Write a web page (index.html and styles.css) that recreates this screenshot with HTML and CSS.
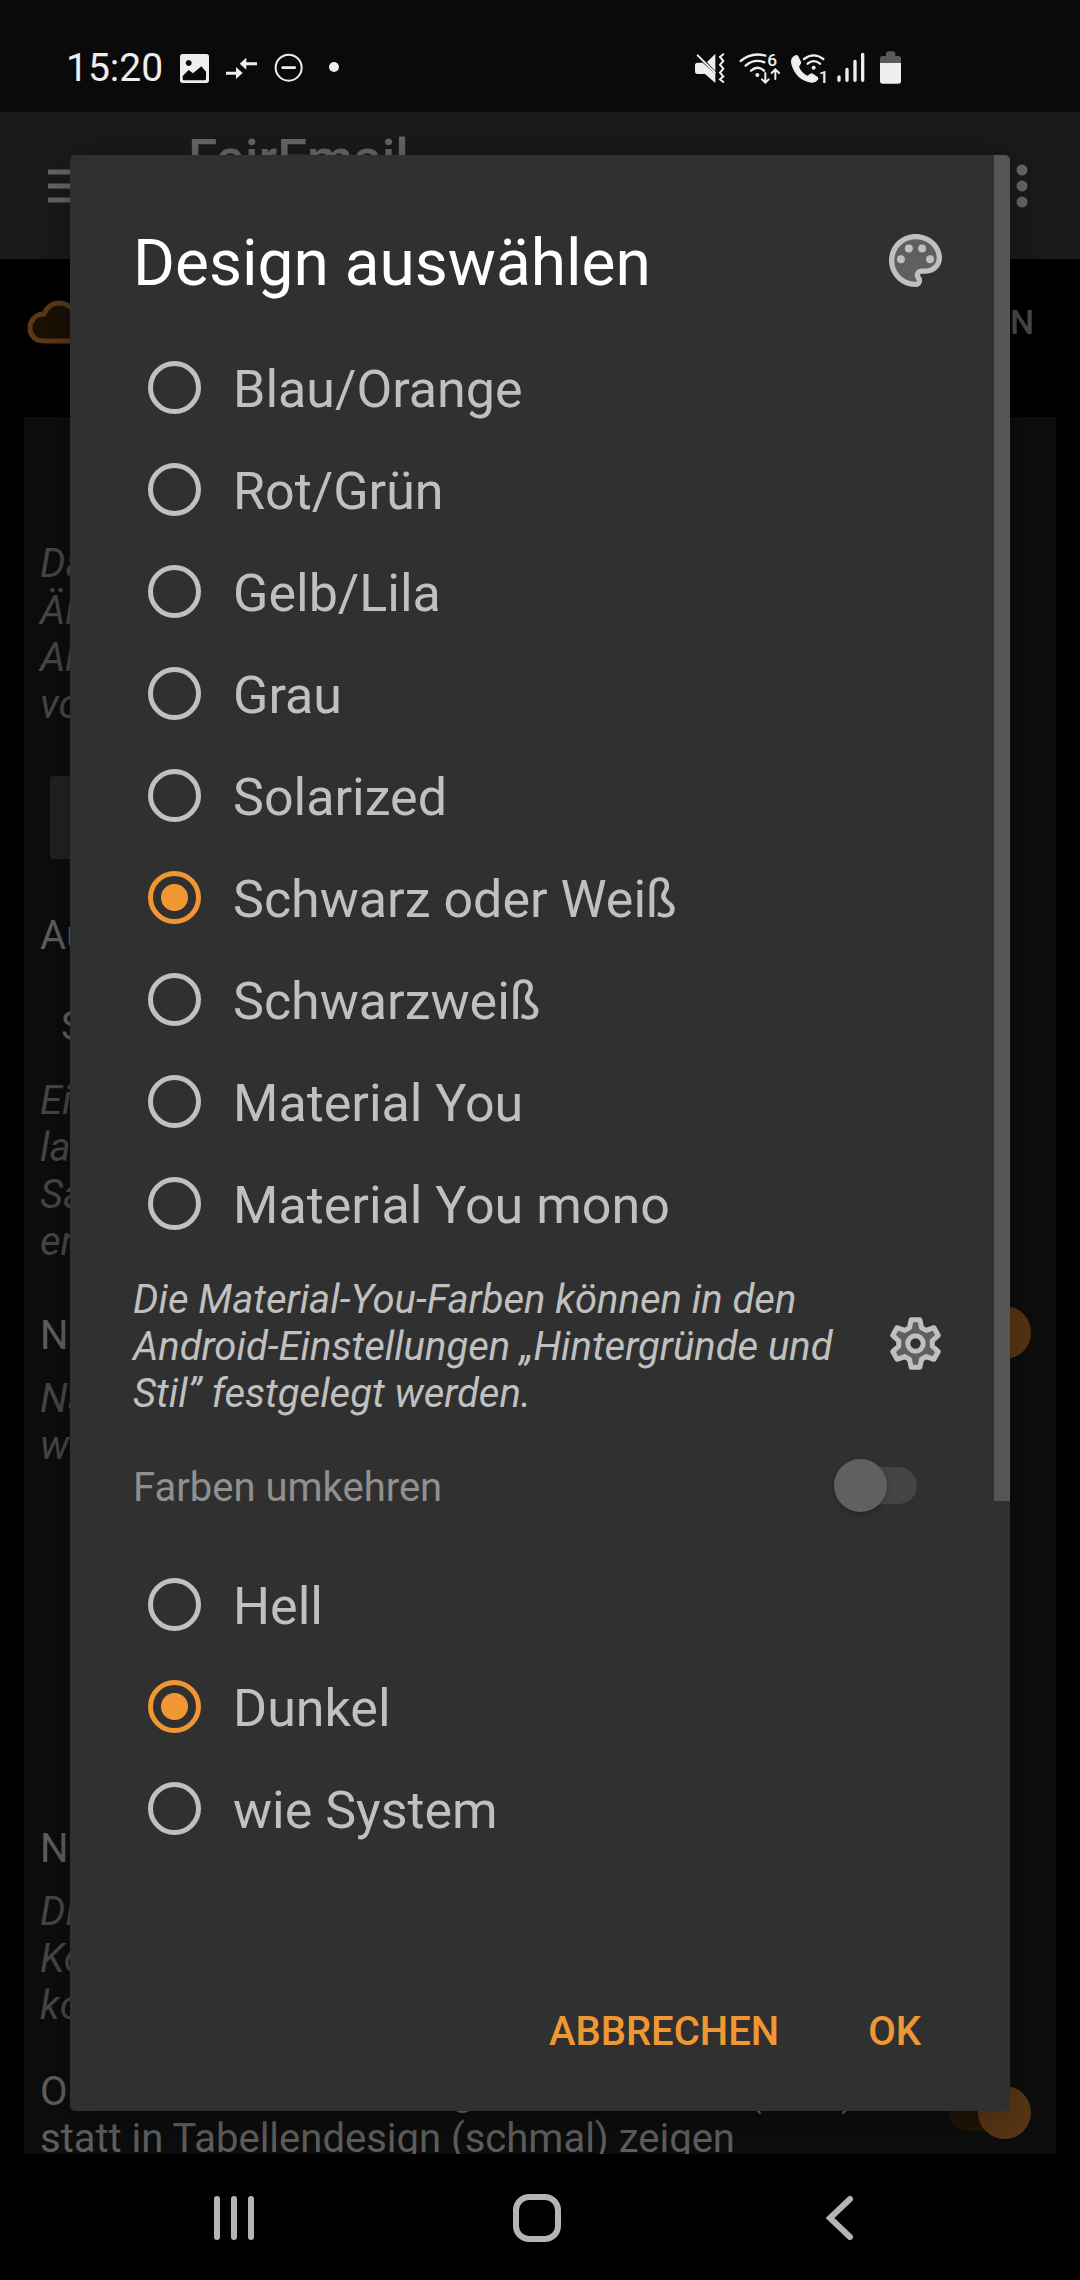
FILE: index.html
```html
<!DOCTYPE html>
<html lang="de">
<head>
    <meta charset="utf-8">
    <meta name="viewport" content="width=device-width">
    <title>FairEmail</title>
    <link rel="stylesheet" href="styles.css">
</head>
<body>
    <div class="statusbar">
        <div class="status-left">
            <span class="time">15:20</span>
            <svg width="29" height="36" viewBox="360 30 87 108">
                <path fill-rule="evenodd" fill="#eee" d="M368 42h71q8 0 8 8v71q0 8-8 8h-71q-8 0-8-8V50q0-8 8-8zM368 108v8q0 5 5 5h60q5 0 5-5V95l-14-16-25 21-13-10zM386 60a9 9 0 1 0 .1 0z"/>
            </svg>
            <svg width="31" height="36" viewBox="498 30 93 108">
                <path fill="#eee" d="M498 95h30V81l20 18-20 18v-13h-30zM591 67h-32V53l-20 18 20 18V76h32z"/>
            </svg>
            <svg width="29" height="36" viewBox="642 30 87 108">
                <circle cx="686" cy="83" r="39" fill="none" stroke="#eee" stroke-width="6"/>
                <path stroke="#eee" stroke-width="8" stroke-linecap="round" d="M668 83h36"/>
            </svg>
            <svg width="19" height="36" viewBox="783 30 57 108">
                <circle cx="825" cy="81" r="15" fill="#eee"/>
            </svg>
        </div>
        <div class="status-right">
            <svg width="32" height="36" viewBox="45 30 96 108">
                <path fill="#eee" d="M106 41v53L81 66zM53 68h15l38 34v27L75 102H53q-8 0-8-8V76q0-8 8-8z"/>
                <path fill="none" stroke="#eee" stroke-width="6" stroke-linecap="round" d="M53 46l52 52M130 43l-10 8 10 12-10 11 10 12-10 12 10 11-10 9 10 8"/>
            </svg>
            <svg width="40" height="36" viewBox="177 30 120 108">
                <g fill="none" stroke="#eee" stroke-width="7" stroke-linecap="round">
                    <path d="M182 63q33-28 74-16M197 77q26-22 56-10M213 92q20-17 39 0"/>
                    <path stroke-width="6" d="M256 99v27M246 118l10 10 10-10M286 117V90M275 99l11-11 11 11"/>
                </g>
                <circle cx="232" cy="105" r="6" fill="#eee"/>
                <text x="262" y="79" class="badge-text">6</text>
            </svg>
            <svg width="34" height="36" viewBox="333 30 102 108">
                <path fill="#eee" d="M346 46q5-3 9 3l8 16q2 5-3 10l-3 5q8 19 25 27l9-6q4-3 9 1l13 9q4 3 1 8-8 11-21 9-45-7-59-55-5-20 12-27z"/>
                <path fill="none" stroke="#eee" stroke-width="7" stroke-linecap="round" d="M372 57q29-22 58 0M383 71q18-15 37 0"/>
                <circle cx="401" cy="83" r="6" fill="#eee"/>
                <text x="416" y="128" class="badge-text">1</text>
            </svg>
            <svg width="31" height="36" viewBox="471 30 93 108">
                <path stroke="#eee" stroke-width="10" stroke-linecap="round" d="M477 111v10M501 88v33M525 64v57M548 43v78"/>
            </svg>
            <svg width="21" height="36" viewBox="600 30 63 108">
                <path fill="#5a5a5a" d="M600 69V56q0-8 8-8h10v-6q0-8 8-8h12q8 0 8 8v6h9q8 0 8 8v13z"/>
                <path fill="#eee" d="M600 69h63v54q0 8-8 8h-47q-8 0-8-8z"/>
            </svg>
        </div>
    </div>

    <header class="appbar">
        <svg class="menu-icon" width="50" height="34" viewBox="0 0 50 34">
            <path stroke="#666" stroke-width="5" d="M0 3h50M0 17h50M0 31h50"/>
        </svg>
        <span class="app-title">FairEmail</span>
        <svg width="12" height="44" viewBox="0 0 12 44">
            <g fill="#666"><circle cx="6" cy="6" r="5.5"/><circle cx="6" cy="22" r="5.5"/><circle cx="6" cy="38" r="5.5"/></g>
        </svg>
    </header>

    <div class="tabs">
        <svg width="66" height="44" viewBox="0 0 66 44">
            <path fill="#1b1005" stroke="#5c3a17" stroke-width="5" d="M16 41C8 41 3 35 3 28S8 14 17 14C20 7 25 3 32 3c9 0 15 6 17 14 8 0 14 5 14 12s-5 12-12 12z"/>
        </svg>
        <span class="tab">N</span>
    </div>

    <main class="card">
        <p class="note">Da<br>Än<br>Ab<br>vo</p>
        <div class="card-button"></div>
        <p class="option">Au</p>
        <p class="spinner">S</p>
        <p class="note">Ei<br>la<br>Sa<br>er</p>
        <div class="option-row">
            <p class="option">N</p>
            <span class="toggle"></span>
        </div>
        <p class="note preview">Na<br>w</p>
        <p class="option">N</p>
        <p class="note">Di<br>Ko<br>ko</p>
        <div class="option-row last">
            <p class="option">Oberflächen nun ständig als Kartenliste (breit) statt in Tabellendesign (schmal) zeigen</p>
            <span class="toggle"></span>
        </div>
    </main>

    <nav class="navbar">
        <svg width="44" height="46" viewBox="0 0 44 46">
            <path stroke="#b4b4b4" stroke-width="6" stroke-linecap="round" d="M5 4v38M22 4v38M39 4v38"/>
        </svg>
        <svg width="48" height="48" viewBox="0 0 48 48">
            <rect x="3" y="3" width="42" height="42" rx="13" fill="none" stroke="#b4b4b4" stroke-width="6"/>
        </svg>
        <svg width="44" height="46" viewBox="0 0 44 46">
            <path fill="none" stroke="#b4b4b4" stroke-width="6" stroke-linecap="round" d="M32 4L12 23l20 19"/>
        </svg>
    </nav>

    <form class="dialog">
        <div class="dialog-head">
            <h1>Design auswählen</h1>
            <button type="button" class="icon-button" aria-label="Palette">
                <svg width="53" height="53" viewBox="2 2 20 20">
                    <path fill="#5f5f5f" d="M12 3a9 9 0 0 0 0 18c.8 0 1.500-.7 1.500-1.500l-.8-2c0-.8.7-1.500 1.500-1.500H16c2.800 0 5-2.200 5-5 0-4.400-4-8-9-8z"/>
                    <path fill="#c0c0c0" d="M12 22C6.490 22 2 17.510 2 12S6.490 2 12 2s10 4.040 10 9c0 3.310-2.690 6-6 6h-1.770c-.28 0-.5.22-.5.5 0 .12.05.23.13.33.41.47.64 1.060.64 1.670 0 1.380-1.120 2.500-2.500 2.500zM12 4c-4.410 0-8 3.590-8 8s3.590 8 8 8c.28 0 .5-.22.5-.5 0-.16-.08-.28-.14-.35-.41-.46-.63-1.050-.63-1.650 0-1.380 1.120-2.500 2.500-2.500H16c2.210 0 4-1.790 4-4 0-3.860-3.590-7-8-7z"/>
                    <g fill="#c0c0c0"><circle cx="6.500" cy="11.500" r="1.500"/><circle cx="9.500" cy="7.500" r="1.500"/><circle cx="14.500" cy="7.500" r="1.500"/><circle cx="17.500" cy="11.500" r="1.500"/></g>
                </svg>
            </button>
        </div>

        <div class="choices">
            <label class="choice"><input type="radio" name="theme"><span>Blau/Orange</span></label>
            <label class="choice"><input type="radio" name="theme"><span>Rot/Grün</span></label>
            <label class="choice"><input type="radio" name="theme"><span>Gelb/Lila</span></label>
            <label class="choice"><input type="radio" name="theme"><span>Grau</span></label>
            <label class="choice"><input type="radio" name="theme"><span>Solarized</span></label>
            <label class="choice"><input type="radio" name="theme" checked><span>Schwarz oder Weiß</span></label>
            <label class="choice"><input type="radio" name="theme"><span>Schwarzweiß</span></label>
            <label class="choice"><input type="radio" name="theme"><span>Material You</span></label>
            <label class="choice"><input type="radio" name="theme"><span>Material You mono</span></label>
        </div>

        <div class="hint">
            <p>Die Material-You-Farben können in den Android-Einstellungen „Hintergründe und Stil” festgelegt werden.</p>
            <button type="button" class="icon-button" aria-label="Einstellungen">
                <svg width="53" height="53" viewBox="-79 -79 158 158">
                    <path fill="#5f5f5f" stroke="#c0c0c0" stroke-width="15" stroke-linejoin="round" d="M-18-47L-13-71 13-71 18-47 32-39 55-47 68-24 50-8 50 8 68 24 55 47 32 39 18 47 13 71-13 71-18 47-32 39-55 47-68 24-50 8-50-8-68-24-55-47-32-39z"/>
                    <circle r="23" fill="#303030" stroke="#c0c0c0" stroke-width="15"/>
                </svg>
            </button>
        </div>

        <label class="switch-row">
            <span>Farben umkehren</span>
            <input type="checkbox" role="switch" disabled>
        </label>

        <div class="choices">
            <label class="choice"><input type="radio" name="mode"><span>Hell</span></label>
            <label class="choice"><input type="radio" name="mode" checked><span>Dunkel</span></label>
            <label class="choice"><input type="radio" name="mode"><span>wie System</span></label>
        </div>

        <div class="actions">
            <button type="button">ABBRECHEN</button>
            <button type="button">OK</button>
        </div>
        <div class="scroll-thumb"></div>
    </form>
</body>
</html>
```

FILE: styles.css
```css
* {
    box-sizing: border-box;
}

body {
    margin: 0;
    height: 100vh;
    display: flex;
    flex-direction: column;
    position: relative;
    overflow: hidden;
    background: #000;
    color: #c0c0c0;
    font-family: Roboto, "Liberation Sans", sans-serif;
    font-size: 40px;
    line-height: 47px;
}

svg {
    display: block;
    flex: none;
    overflow: visible;
}

p {
    margin: 0;
}

/* status bar */
.statusbar {
    display: flex;
    justify-content: space-between;
    flex: none;
    height: 112px;
    padding: 50px 179px 0 66px;
    background: #0a0a0a;
}

.status-left,
.status-right {
    display: flex;
    align-items: center;
    height: 36px;
}

.status-left {
    gap: 17px;
}

.status-right {
    gap: 12px;
}

.time {
    color: #eee;
    font-size: 39px;
}

.badge-text {
    fill: #eee;
    font-size: 52px;
    font-weight: 500;
}

/* page behind the dialog */
.appbar {
    display: flex;
    align-items: center;
    flex: none;
    height: 147px;
    padding: 0 52px 0 48px;
    background: #1a1a1a;
}

.app-title {
    flex: 1;
    align-self: flex-start;
    padding: 17px 0 0 90px;
    color: #666;
    font-size: 53px;
    font-weight: 500;
    line-height: 60px;
}

.tabs {
    display: flex;
    align-items: center;
    justify-content: space-between;
    flex: none;
    height: 126px;
    padding: 0 46px 0 27px;
}

.tab {
    color: #4a4a4a;
    font-size: 34px;
    font-weight: 500;
}

.card {
    flex: 1;
    overflow: hidden;
    margin: 32px 24px 0;
    padding: 123px 16px 0;
    background: #0d0d0d;
    color: #606060;
}

.note {
    color: #484848;
    font-style: italic;
}

.card-button {
    width: 50%;
    height: 83px;
    margin: 48px 10px 53px;
    border-radius: 4px;
    background: #222;
}

.spinner {
    padding: 44px 0 27px 21px;
}

.option-row {
    display: flex;
    align-items: center;
    justify-content: space-between;
    padding-top: 47px;
}

.option-row.last {
    padding-top: 39px;
}

.preview {
    padding: 16px 0;
    margin-bottom: 340px;
}

.option-row.last .option {
    max-width: 860px;
}

.option + .note {
    padding-top: 16px;
}

.toggle {
    width: 82px;
    height: 37px;
    border-radius: 19px;
    background: #1f1408;
    display: flex;
    align-items: center;
    justify-content: flex-end;
    flex: none;
}

.toggle::after {
    content: "";
    width: 53px;
    height: 53px;
    border-radius: 50%;
    background: #583614;
    flex: none;
}

.card .toggle {
    margin: 0 9px 6px 0;
}

.navbar {
    display: flex;
    align-items: center;
    justify-content: space-around;
    flex: none;
    height: 126px;
    padding: 2px 90px 0 84px;
}

/* dialog */
.dialog {
    position: absolute;
    top: 155px;
    left: 70px;
    right: 70px;
    padding: 69px 0 29px 63px;
    border-radius: 5px;
    overflow: hidden;
    background: #303030;
    box-shadow: 0 8px 48px rgba(0, 0, 0, 0.3);
}

.dialog-head {
    display: flex;
    justify-content: space-between;
    align-items: flex-start;
    padding: 0 59px 32px 0;
}

h1 {
    margin: 0;
    color: #fff;
    font-size: 64px;
    font-weight: 400;
    line-height: 80px;
}

button {
    border: 0;
    background: none;
    font-family: inherit;
}

.icon-button {
    display: flex;
    align-items: center;
    justify-content: center;
    flex: none;
    width: 72px;
    height: 72px;
    padding: 0;
}

.choice {
    display: flex;
    align-items: center;
    gap: 32px;
    height: 102px;
    padding-left: 15px;
    font-size: 52px;
}

.choice span,
.switch-row span {
    padding-top: 4px;
}

input {
    appearance: none;
    flex: none;
    margin: 0;
}

input[type="radio"] {
    width: 53px;
    height: 53px;
    border: 5px solid #c0c0c0;
    border-radius: 50%;
}

input[type="radio"]:checked {
    border-color: #f09733;
    background: radial-gradient(circle, #f09733 13px, transparent 14px);
}

.hint {
    display: flex;
    align-items: center;
    justify-content: space-between;
    min-height: 148px;
    margin-top: 15px;
    padding-right: 59px;
    font-style: italic;
}

.hint p {
    align-self: flex-end;
    max-width: 720px;
}

.switch-row {
    display: flex;
    align-items: center;
    justify-content: space-between;
    height: 102px;
    margin: 17px 0;
    padding-right: 93px;
    color: #909090;
}

input[type="checkbox"] {
    display: flex;
    align-items: center;
    width: 83px;
    height: 37px;
    border-radius: 19px;
    background: #444;
}

input[type="checkbox"]::before {
    content: "";
    width: 53px;
    height: 53px;
    border-radius: 50%;
    background: #606060;
    box-shadow: 0 2px 4px rgba(0, 0, 0, 0.3);
    flex: none;
}

.actions {
    display: flex;
    justify-content: flex-end;
    gap: 45px;
    margin-top: 121px;
    padding-right: 67px;
}

.actions button {
    height: 102px;
    padding: 0 22px;
    color: #f09733;
    font-size: 40px;
    font-weight: 500;
}

.scroll-thumb {
    position: absolute;
    top: 0;
    right: 0;
    width: 16px;
    height: 1346px;
    background: #555;
}
```
